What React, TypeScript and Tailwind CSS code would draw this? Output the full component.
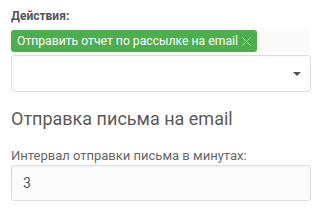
import { X } from "lucide-react";

export default function App() {
  return (
    <div className="min-h-screen bg-white px-[11px] pt-[8px] font-['Roboto',sans-serif]">
      <div className="text-[12px] leading-[16px] font-bold text-[#555]">Действия:</div>

      <div className="mt-[4px] w-[300px] bg-[#fafafa] rounded-[3px]">
        <span className="inline-flex h-[22px] items-center gap-[1px] rounded-[3px] bg-[#4cae4c] pl-[6px] pr-[3px] text-[12.2px] text-white">
          Отправить отчет по рассылке на email
          <X className="h-[15px] w-[15px] text-white/60" strokeWidth={1.4} />
        </span>
      </div>

      <div className="mt-[3px] flex h-[37px] w-[300px] items-center justify-end rounded-[3px] border border-[#ddd] bg-white pr-[9px] shadow-[inset_0_1px_2px_rgba(0,0,0,0.04)]">
        <svg width="8" height="4" viewBox="0 0 8 4">
          <path d="M0 0h8L4 4z" fill="#555" />
        </svg>
      </div>

      <div className="mt-[15px] text-[18px] leading-[24px] text-[#5a5a5a]">Отправка письма на email</div>

      <div className="mt-[16px] text-[13px] leading-[18px] text-[#666]">Интервал отправки письма в минутах:</div>

      <div className="flex h-[36px] w-[300px] items-center rounded-[3px] border border-[#ddd] bg-[#fcfcfc] px-[11px] text-[14px] text-[#555] shadow-[inset_0_1px_2px_rgba(0,0,0,0.04)]">
        3
      </div>
    </div>
  );
}
